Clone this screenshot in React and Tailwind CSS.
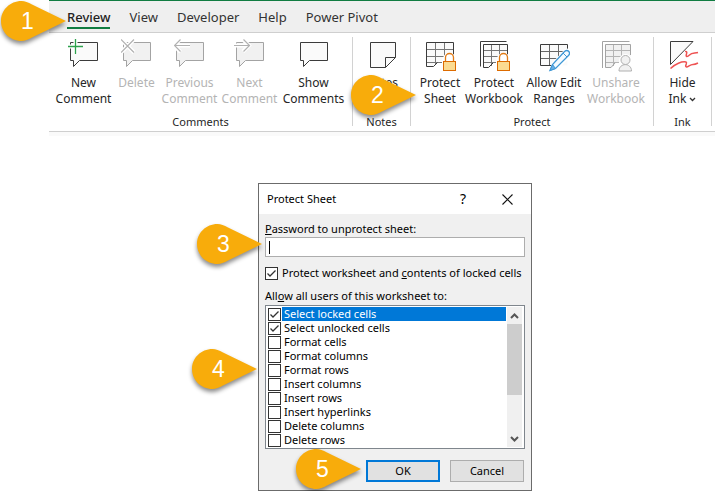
import React from "react";

const DARK = "#3b3b3b";
const FADED = "#a3a3a3";

function Icon({ children }) {
  return (
    <svg width="32" height="34" viewBox="0 0 32 34" fill="none" aria-hidden="true" className="shrink-0">
      {children}
    </svg>
  );
}

function Bubble({ faded }) {
  return (
    <path
      d="M2.5 4.5H29.5V22.5H11.5L5.5 28.5V22.5H2.5Z"
      fill={faded ? "#f1f1f1" : "#fafafa"}
      stroke={faded ? FADED : DARK}
    />
  );
}

function NewCommentIcon() {
  return (
    <Icon>
      <Bubble />
      <path d="M7.5 1V16M0 8.5H15" stroke="#fff" strokeWidth="4" />
      <path d="M7.5 1V16M0 8.5H15" stroke="#2da14c" strokeWidth="1.3" />
    </Icon>
  );
}

function DeleteIcon() {
  return (
    <Icon>
      <Bubble faded />
      <path d="M0 1.5L13 14.5M13 1.5L0 14.5" stroke="#fff" strokeWidth="4" />
      <path d="M0 1.5L13 14.5M13 1.5L0 14.5" stroke="#b1b1b1" strokeWidth="1.2" />
    </Icon>
  );
}

function PreviousIcon() {
  return (
    <Icon>
      <Bubble faded />
      <path d="M0 7.5H16M6.5 1L0 7.5L6.5 14" stroke="#fff" strokeWidth="4" />
      <path d="M0.5 7.5H16M6.5 1.5L0.5 7.5L6.5 13.5" stroke="#b1b1b1" strokeWidth="1.2" />
    </Icon>
  );
}

function NextIcon() {
  return (
    <Icon>
      <Bubble faded />
      <path d="M0 7.5H15M9 1.5L15 7.5L9 13.5" stroke="#fff" strokeWidth="4" />
      <path d="M0 7.5H15.5M9.5 1.5L15.5 7.5L9.5 13.5" stroke="#b1b1b1" strokeWidth="1.2" />
    </Icon>
  );
}

function ShowIcon() {
  return (
    <Icon>
      <Bubble />
    </Icon>
  );
}

function NotesIcon() {
  return (
    <Icon>
      <path d="M4.5 4.5H29.5V19.5L19.5 29.5H4.5Z" fill="#fafafa" stroke={DARK} />
      <path d="M29.5 19.5H19.5V29.5" stroke={DARK} />
    </Icon>
  );
}

function Lock() {
  return (
    <>
      <path d="M18 34V21L20.5 17L25.5 13.5L30.5 17L32 20V34Z" fill="#fff" />
      <path d="M21.5 23V19.5A4 4 0 0 1 29.5 19.5V23" stroke="#e07a14" strokeWidth="1.3" />
      <rect x="19.5" y="23.5" width="12" height="9" fill="#fbdb91" stroke="#dd6b00" />
    </>
  );
}

function ProtectSheetIcon() {
  return (
    <Icon>
      <path d="M2.5 4.5H29.5V23H15L9.5 28.5H2.5Z" fill="#fafafa" />
      <path d="M3 11.5H29M3 18.5H29M3 24.5H19M11.5 5V27M20.5 5V25" stroke="#777" />
      <path d="M29.5 17V4.5H2.5V28.5H9.5L13.5 24.5" stroke={DARK} />
      <Lock />
    </Icon>
  );
}

function ProtectWorkbookIcon() {
  return (
    <Icon>
      <path d="M28.5 3.5H2.5V28.5" stroke={DARK} />
      <path d="M5.5 6.5H29.5V24H16L11.5 29.5H5.5Z" fill="#fafafa" />
      <path d="M6 12.5H29M6 18.5H29M6 24.5H19M13.5 7V28M21.5 7V25" stroke="#777" />
      <path d="M29.5 18V6.5H5.5V29.5H10.5L15 25" stroke={DARK} />
      <Lock />
    </Icon>
  );
}

function AllowEditIcon() {
  return (
    <Icon>
      <path d="M2.5 6.5H29.5V27.5H2.5Z" fill="#fafafa" />
      <path d="M3 13.5H29M3 20.5H29M11.5 7V27M20.5 7V27" stroke="#666" />
      <path d="M29.5 12V6.5H2.5V27.5H14" stroke={DARK} />
      <path d="M11 34L14 25L27 11L34 10V18L20 31Z" fill="#fff" />
      <path d="M12 32.5L14.5 26.5L26.5 13.5Q29 11.5 30.8 13.5Q32.5 15.5 30.5 17.5L17.5 30.5Z" fill="#f5fbff" stroke="#3e97d5" strokeWidth="1.3" />
      <path d="M12 32.5L14.5 26.5L17.5 30.5Z" fill="#69afe5" stroke="#3e97d5" />
      <path d="M25 15L29 19" stroke="#3e97d5" />
    </Icon>
  );
}

function UnshareIcon() {
  return (
    <Icon>
      <path d="M29.5 3.5H2.5V30" stroke={FADED} />
      <path d="M5.5 6.5H30.5V24H16L11.5 29.5H5.5Z" fill="#f1f1f1" />
      <path d="M6 12.5H30M6 18.5H30M6 24.5H19M13.5 7V28M21.5 7V25" stroke="#b5b5b5" />
      <path d="M30.5 17V6.5H5.5V29.5H11L15 25" stroke={FADED} />
      <circle cx="25.5" cy="22.5" r="6.5" fill="#fff" />
      <path d="M17 34V31L20 26H31L32 28V34Z" fill="#fff" />
      <circle cx="25.5" cy="22" r="4.5" fill="#f1f1f1" stroke="#b0b0b0" />
      <path d="M19 33C19 24.5 31.5 24.5 31.5 33Z" fill="#f1f1f1" stroke="#b0b0b0" />
    </Icon>
  );
}

function HideInkIcon() {
  return (
    <Icon>
      <path d="M3.5 3.5H26L3.5 26.5Z" fill="#fafafa" stroke={DARK} />
      <path
        d="M18 13.5C20 13 20 14.5 19.5 16C18.5 19 20 19.5 22.5 17C25 14.5 27.5 15.5 31 14.5M3.5 30.5C8 26 15 23 19 24C21 25 17 28.5 19.5 29C21.5 29 23 26.5 26 26.5C28 26.5 29 26 31 25"
        stroke="#ee5353"
        strokeWidth="1.5"
      />
    </Icon>
  );
}

function RibbonButton({ icon, lines, width, disabled, menu }) {
  return (
    <button
      type="button"
      disabled={disabled}
      className={`flex shrink-0 flex-col items-center gap-[3px] ${width} ${disabled ? "text-[#b4b4b4]" : "text-[#262626]"}`}
    >
      {icon}
      <span className="flex flex-col items-center whitespace-nowrap text-[12px] leading-4">
        <span>{lines[0]}</span>
        <span className="flex items-center gap-[3px]">
          {lines[1]}
          {menu && (
            <svg width="7" height="5" viewBox="0 0 7 5" fill="none" aria-hidden="true">
              <path d="M1 1L3.5 3.5L6 1" stroke="#333" strokeWidth="1.3" />
            </svg>
          )}
        </span>
      </span>
    </button>
  );
}

function Group({ label, width, children }) {
  return (
    <section className={`flex shrink-0 items-start ${width}`} aria-label={label}>
      <div className="flex grow flex-col items-center gap-2">
        <div className="flex h-[69px] pt-px">{children}</div>
        <div className="text-[11px] leading-4 text-[#262626]">{label}</div>
      </div>
      <div className="h-[89px] w-px bg-[#d2d2d2]" />
    </section>
  );
}

function Callout({ number, place }) {
  return (
    <div className={`absolute z-10 h-10 w-[65px] ${place}`}>
      <svg width="65" height="40" viewBox="0 0 65 40" className="absolute overflow-visible drop-shadow-[0_3px_2px_rgba(0,0,0,0.45)]" aria-hidden="true">
        <path d="M65 20L31 3.5C27 1.3 24 0 20.5 0C9 0 0 9 0 20C0 31 9 40 20.5 40C24 40 27 38.7 31 36.5Z" fill="#f8ac0b" />
      </svg>
      <span className="relative flex h-10 w-[53px] items-center justify-center font-['Liberation_Sans',sans-serif] text-[23px] text-white">
        {number}
      </span>
    </div>
  );
}

const tabs = ["View", "Developer", "Help", "Power Pivot"];

function Ribbon() {
  return (
    <header className="relative ml-[49px] border-t border-[#107c41]">
      <nav className="flex h-8 items-start gap-[19px] border-b border-[#cfcfcf] bg-[#efefef] pl-[18px] pt-[6px] text-[13px] leading-5 text-[#333]">
        <a href="#review" className="h-[22px] border-b-2 border-[#107c41] font-medium text-[#222]">Review</a>
        {tabs.map((tab) => (
          <a key={tab} href={`#${tab}`}>{tab}</a>
        ))}
      </nav>
      <div className="flex h-[99px] overflow-hidden border-b border-[#cfcfcf] pt-1">
        <Group label="Comments" width="w-[304px]">
          <RibbonButton icon={<NewCommentIcon />} lines={["New", "Comment"]} width="w-[60px]" />
          <RibbonButton icon={<DeleteIcon />} lines={["Delete"]} width="w-[46px]" disabled />
          <RibbonButton icon={<PreviousIcon />} lines={["Previous", "Comment"]} width="w-[60px]" disabled />
          <RibbonButton icon={<NextIcon />} lines={["Next", "Comment"]} width="w-[60px]" disabled />
          <RibbonButton icon={<ShowIcon />} lines={["Show", "Comments"]} width="w-[68px]" />
        </Group>
        <Group label="Notes" width="w-[58px]">
          <RibbonButton icon={<NotesIcon />} lines={["Notes"]} width="w-[48px]" />
        </Group>
        <Group label="Protect" width="w-[243px]">
          <RibbonButton icon={<ProtectSheetIcon />} lines={["Protect", "Sheet"]} width="w-[48px]" />
          <RibbonButton icon={<ProtectWorkbookIcon />} lines={["Protect", "Workbook"]} width="w-[60px]" />
          <RibbonButton icon={<AllowEditIcon />} lines={["Allow Edit", "Ranges"]} width="w-[60px]" />
          <RibbonButton icon={<UnshareIcon />} lines={["Unshare", "Workbook"]} width="w-[64px]" disabled />
        </Group>
        <Group label="Ink" width="w-[58px]">
          <RibbonButton icon={<HideInkIcon />} lines={["Hide", "Ink"]} width="w-[48px]" menu />
        </Group>
      </div>
      <div className="h-1 bg-[#fafafa]" />
      <Callout number="1" place="left-[-48px] top-0" />
      <Callout number="2" place="left-[302px] top-[74px]" />
    </header>
  );
}

function CheckBox({ id, checked }) {
  return (
    <span className="relative flex size-[13px] shrink-0">
      <input
        id={id}
        type="checkbox"
        defaultChecked={checked}
        className="peer size-[13px] appearance-none border border-[#333] bg-white"
      />
      <svg viewBox="0 0 13 13" fill="none" aria-hidden="true" className="pointer-events-none absolute inset-0 hidden peer-checked:block">
        <path d="M2.5 6.5L5 9L10.5 3.5" stroke="#333" strokeWidth="1.3" />
      </svg>
    </span>
  );
}

const permissions = [
  "Select locked cells",
  "Select unlocked cells",
  "Format cells",
  "Format columns",
  "Format rows",
  "Insert columns",
  "Insert rows",
  "Insert hyperlinks",
  "Delete columns",
  "Delete rows",
];

function PermissionList() {
  return (
    <div className="flex h-36 border border-[#7f868d] bg-white p-px">
      <ul className="grow pl-px" aria-labelledby="allow">
        {permissions.map((name, i) => (
          <li key={name} className="flex h-3.5 items-center gap-px">
            <CheckBox id={`permission-${i}`} checked={i < 2} />
            <label
              htmlFor={`permission-${i}`}
              className={`grow pl-0.5 leading-[14px] ${i === 0 ? "bg-[#0078d7] text-white" : ""}`}
            >
              {name}
            </label>
          </li>
        ))}
      </ul>
      <div className="ml-px mr-px flex w-[15px] flex-col items-center bg-[#f0f0f0]">
        <svg width="15" height="17" viewBox="0 0 15 17" fill="none" aria-hidden="true">
          <path d="M4 11L7.5 7.5L11 11" stroke="#555" strokeWidth="2" />
        </svg>
        <div className="h-[71px] w-full bg-[#cdcdcd]" />
        <svg width="15" height="17" viewBox="0 0 15 17" fill="none" aria-hidden="true" className="mt-auto">
          <path d="M4 7L7.5 10.5L11 7" stroke="#555" strokeWidth="2" />
        </svg>
      </div>
    </div>
  );
}

function Dialog() {
  return (
    <section role="dialog" aria-labelledby="title" className="relative mx-auto w-[274px] border border-[#6b6b6b] bg-[#f0f0f0] text-[11px] text-black">
      <div className="flex h-[30px] items-center bg-white pl-2 pr-4">
        <h1 id="title" className="grow text-[11px]">Protect Sheet</h1>
        <button type="button" aria-label="Help" className="mr-7 w-4 text-[14px] leading-4">?</button>
        <button type="button" aria-label="Close" className="flex w-4 justify-center">
          <svg width="11" height="11" viewBox="0 0 11 11" fill="none" aria-hidden="true">
            <path d="M0.5 0.5L10.5 10.5M10.5 0.5L0.5 10.5" stroke="#111" strokeWidth="1.1" />
          </svg>
        </button>
      </div>
      <form className="px-1.5 pb-2 pt-[7px]" onSubmit={(e) => e.preventDefault()}>
        <label htmlFor="password" className="block leading-4"><u>P</u>assword to unprotect sheet:</label>
        <div className="flex h-5 items-center border border-[#adadad] bg-white pl-[3px]">
          <div className="h-[13px] w-px bg-black" />
          <input id="password" type="password" className="h-4 w-full outline-none" />
        </div>
        <div className="mt-2 flex items-center gap-1 leading-4">
          <CheckBox id="protect" checked />
          <label htmlFor="protect">Protect worksheet and <u>c</u>ontents of locked cells</label>
        </div>
        <div id="allow" className="mb-px mt-[7px] leading-4">All<u>o</u>w all users of this worksheet to:</div>
        <PermissionList />
        <div className="mt-[11px] flex justify-end gap-2.5 pr-px">
          <button type="submit" className="h-[22px] w-[74px] border-2 border-[#0078d7] bg-[#e1e1e1]">OK</button>
          <button type="button" className="h-[22px] w-[74px] border border-[#adadad] bg-[#e1e1e1]">Cancel</button>
        </div>
      </form>
      <Callout number="3" place="left-[-62px] top-[40px]" />
      <Callout number="4" place="left-[-67px] top-[165px]" />
      <Callout number="5" place="left-[37px] top-[265px]" />
    </section>
  );
}

export default function App() {
  return (
    <main className="bg-white font-['Noto_Sans',sans-serif]">
      <Ribbon />
      <div className="pl-[75px] pt-[47px]">
        <Dialog />
      </div>
    </main>
  );
}
